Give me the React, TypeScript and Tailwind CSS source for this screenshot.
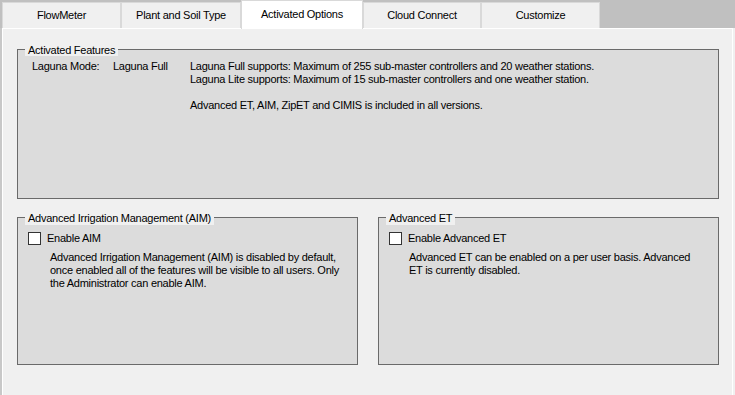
import React from "react";

const font = { fontFamily: '"Liberation Sans", Arial, sans-serif' };

function Tab({ label, w, active }: { label: string; w: string; active?: boolean }) {
  if (active) {
    return (
      <div
        className={`${w} h-[29px] -mb-[1px] relative z-10 bg-white border border-b-0 border-[#d9d9d9] flex items-center justify-center pb-[2px] text-[11px] text-black`}
      >
        {label}
      </div>
    );
  }
  return (
    <div
      className={`${w} h-[26px] bg-[#f0f0f0] border border-b-0 border-[#d9d9d9] flex items-center justify-center text-[11px] text-black`}
    >
      {label}
    </div>
  );
}

function Checkbox() {
  return <div className="w-[13px] h-[13px] bg-white border border-[#333333] shrink-0" />;
}

export default function App() {
  return (
    <div
      className="w-[735px] h-[395px] bg-[#c0c0c0] flex flex-col overflow-hidden text-[11px] leading-[13px] tracking-[-0.25px] text-black"
      style={font}
    >
      {/* tab strip */}
      <div className="h-[28px] flex items-end pl-[2px] shrink-0">
        <Tab label="FlowMeter" w="w-[119px]" />
        <Tab label="Plant and Soil Type" w="w-[120px]" />
        <Tab label="Activated Options" w="w-[122px]" active />
        <Tab label="Cloud Connect" w="w-[118px]" />
        <Tab label="Customize" w="w-[119px]" />
      </div>

      {/* panel row */}
      <div className="flex-1 flex">
        <div className="w-[2px] bg-[#c8c8c8]" />
        <div className="flex-1 bg-[#f0f0f0] border-l border-t border-r border-white flex flex-col">
          {/* Activated Features */}
          <div className="relative ml-[14px] mt-[20px] w-[702px] h-[150px] bg-[#dcdcdc] border border-[#6a6a6a]">
            <div className="absolute left-[7px] -top-[6px] h-[12px] px-[3px] bg-[#f0f0f0] leading-[12px]">
              Activated Features
            </div>
            <div className="flex pt-[10px] pl-[14px]">
              <div className="w-[81px]">Laguna Mode:</div>
              <div className="w-[77px]">Laguna Full</div>
              <div className="flex flex-col">
                <div>Laguna Full supports: Maximum of 255 sub-master controllers and 20 weather stations.</div>
                <div>Laguna Lite supports: Maximum of 15 sub-master controllers and one weather station.</div>
                <div className="h-[13px]" />
                <div>Advanced ET, AIM, ZipET and CIMIS is included in all versions.</div>
              </div>
            </div>
          </div>

          {/* lower boxes */}
          <div className="flex gap-[20px] ml-[14px] mt-[18px]">
            <div className="relative w-[341px] h-[148px] bg-[#dcdcdc] border border-[#6a6a6a]">
              <div className="absolute left-[7px] -top-[6px] h-[13px] px-[3px] bg-[#f0f0f0] leading-[12px]">
                Advanced Irrigation Management (AIM)
              </div>
              <div className="flex items-center gap-[6px] pl-[10px] pt-[14px]">
                <Checkbox />
                <span>Enable AIM</span>
              </div>
              <div className="pl-[32px] pt-[6px] flex flex-col">
                <div>Advanced Irrigation Management (AIM) is disabled by default,</div>
                <div>once enabled all of the features will be visible to all users. Only</div>
                <div>the Administrator can enable AIM.</div>
              </div>
            </div>

            <div className="relative w-[341px] h-[148px] bg-[#dcdcdc] border border-[#6a6a6a]">
              <div className="absolute left-[7px] -top-[6px] h-[13px] px-[3px] bg-[#f0f0f0] leading-[12px]">
                Advanced ET
              </div>
              <div className="flex items-center gap-[6px] pl-[10px] pt-[14px]">
                <Checkbox />
                <span>Enable Advanced ET</span>
              </div>
              <div className="pl-[30px] pt-[6px] flex flex-col">
                <div>Advanced ET can be enabled on a per user basis. Advanced</div>
                <div>ET is currently disabled.</div>
              </div>
            </div>
          </div>
        </div>
        <div className="w-[2px] bg-[#f0f0f0]" />
      </div>
    </div>
  );
}
